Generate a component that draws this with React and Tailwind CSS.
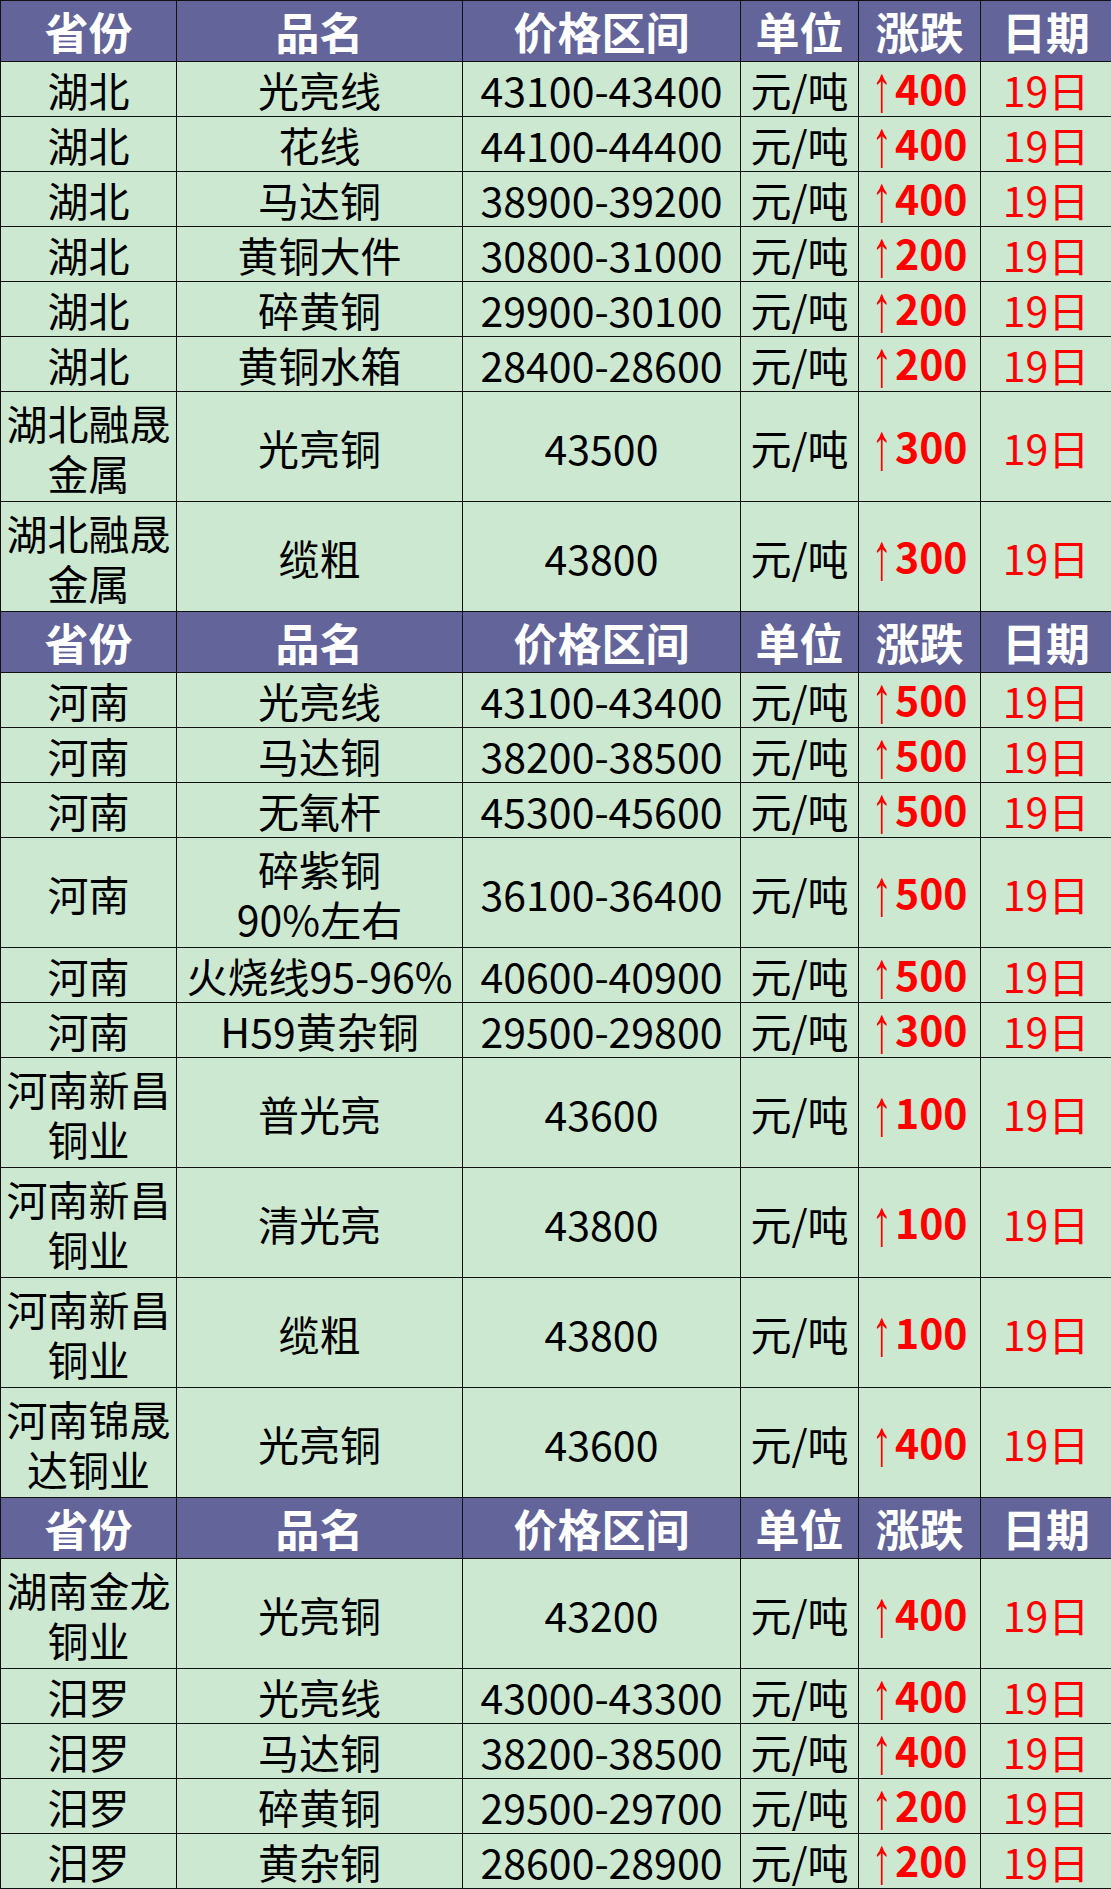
import React from "react";

const HEAD = ["省份", "品名", "价格区间", "单位", "涨跌", "日期"];

const sections = [
  [
    ["湖北", "光亮线", "43100-43400", "400"],
    ["湖北", "花线", "44100-44400", "400"],
    ["湖北", "马达铜", "38900-39200", "400"],
    ["湖北", "黄铜大件", "30800-31000", "200"],
    ["湖北", "碎黄铜", "29900-30100", "200"],
    ["湖北", "黄铜水箱", "28400-28600", "200"],
    [["湖北融晟", "金属"], "光亮铜", "43500", "300"],
    [["湖北融晟", "金属"], "缆粗", "43800", "300"],
  ],
  [
    ["河南", "光亮线", "43100-43400", "500"],
    ["河南", "马达铜", "38200-38500", "500"],
    ["河南", "无氧杆", "45300-45600", "500"],
    ["河南", ["碎紫铜", "90%左右"], "36100-36400", "500"],
    ["河南", "火烧线95-96%", "40600-40900", "500"],
    ["河南", "H59黄杂铜", "29500-29800", "300"],
    [["河南新昌", "铜业"], "普光亮", "43600", "100"],
    [["河南新昌", "铜业"], "清光亮", "43800", "100"],
    [["河南新昌", "铜业"], "缆粗", "43800", "100"],
    [["河南锦晟", "达铜业"], "光亮铜", "43600", "400"],
  ],
  [
    [["湖南金龙", "铜业"], "光亮铜", "43200", "400"],
    ["汨罗", "光亮线", "43000-43300", "400"],
    ["汨罗", "马达铜", "38200-38500", "400"],
    ["汨罗", "碎黄铜", "29500-29700", "200"],
    ["汨罗", "黄杂铜", "28600-28900", "200"],
  ],
];

const Lines = ({ v }) =>
  Array.isArray(v) ? (
    <>
      {v[0]}
      <br />
      {v[1]}
    </>
  ) : (
    v
  );

const td = "border border-[#111] text-center align-middle p-0 whitespace-nowrap";

const HeadRow = () => (
  <tr className="h-[61px] bg-[#636499]">
    {HEAD.map((h) => (
      <th key={h} className={`${td} text-white font-bold text-[44px] leading-[50px]`}>
        {h}
      </th>
    ))}
  </tr>
);

export default function App() {
  return (
    <div className="w-[1111px] bg-[#cde8d0]" style={{ fontFamily: '"Noto Sans CJK SC", "Noto Sans", sans-serif' }}>
      <table className="w-[1111px] border-collapse table-fixed text-[41px] leading-[50px] text-black">
        <colgroup>
          <col className="w-[176px]" />
          <col className="w-[286px]" />
          <col className="w-[278px]" />
          <col className="w-[118px]" />
          <col className="w-[122px]" />
          <col className="w-[131px]" />
        </colgroup>
        <tbody>
          {sections.map((rows, si) => (
            <React.Fragment key={si}>
              <HeadRow />
              {rows.map((r, i) => {
                const tall = Array.isArray(r[0]) || Array.isArray(r[1]);
                return (
                  <tr key={i} className={tall ? "h-[110px]" : "h-[55px]"}>
                    <td className={td}>
                      <Lines v={r[0]} />
                    </td>
                    <td className={td}>
                      <Lines v={r[1]} />
                    </td>
                    <td className={td}>{r[2]}</td>
                    <td className={td}>元/吨</td>
                    <td className={`${td} text-[#ff0000] font-bold`}>
                      <span
                        className="inline-block font-normal scale-y-[1.6] -translate-y-[2px] mr-[3px]"
                        style={{ fontFamily: '"Liberation Sans", sans-serif' }}
                      >
                        ↑
                      </span>
                      {r[3]}
                    </td>
                    <td className={`${td} text-[#ff0000]`}>19日</td>
                  </tr>
                );
              })}
            </React.Fragment>
          ))}
        </tbody>
      </table>
    </div>
  );
}
